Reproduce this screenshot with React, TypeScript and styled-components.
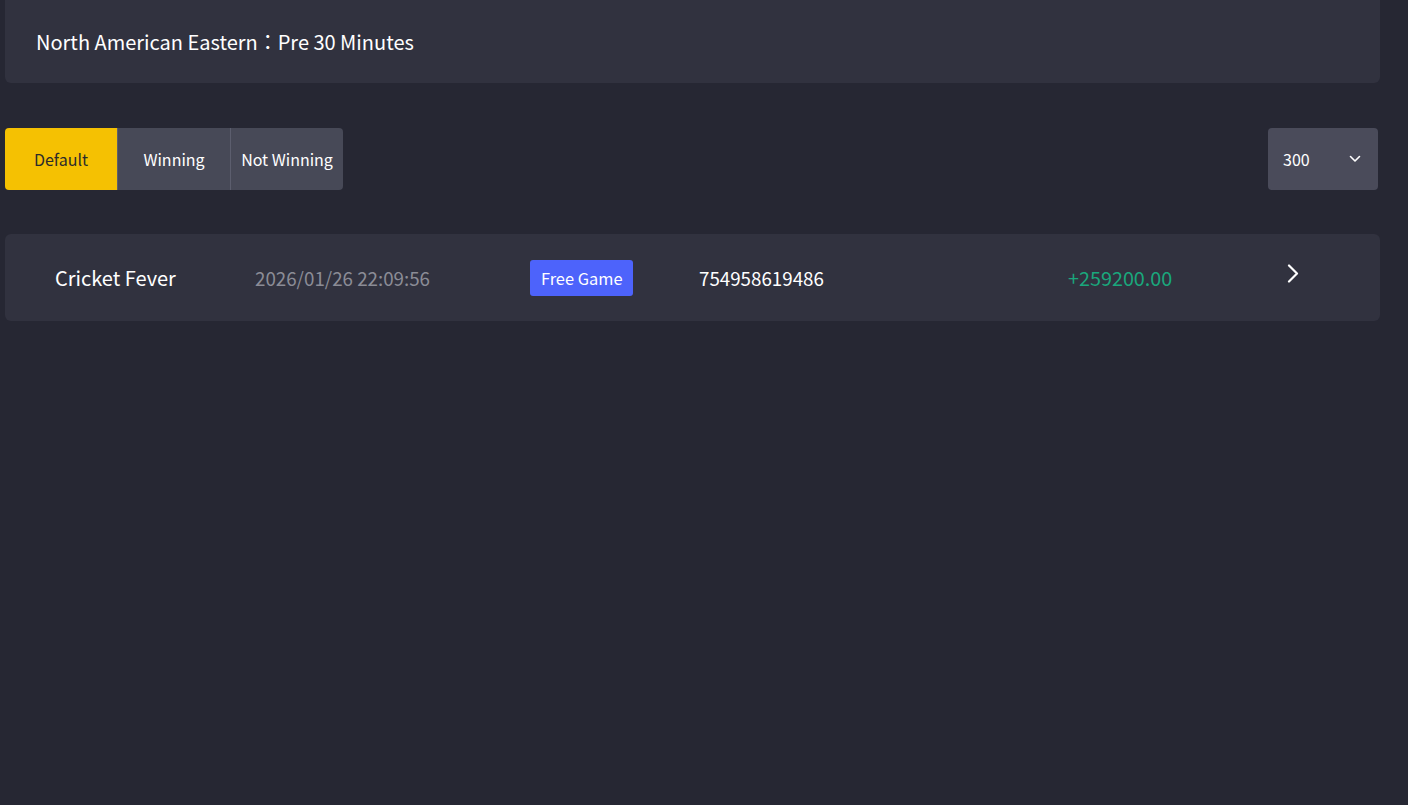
import styled, { createGlobalStyle } from "styled-components";

const GlobalStyle = createGlobalStyle`
  html, body {
    margin: 0;
    padding: 0;
    background-color: #262733;
    font-family: "Noto Sans CJK TC", "Noto Sans", sans-serif;
  }
`;

const Page = styled.main`
  min-height: 805px;
  padding: 0 28px 0 5px;
  box-sizing: border-box;
`;

const ZoneCard = styled.section`
  height: 83px;
  display: flex;
  align-items: center;
  padding-left: 31px;
  background-color: #31323f;
  border-radius: 0 0 6px 6px;
  color: #ffffff;
  font-size: 20px;
`;

const Toolbar = styled.div`
  display: flex;
  justify-content: space-between;
  align-items: center;
  margin-top: 45px;
  padding-right: 2px;
`;

const Tabs = styled.div`
  display: flex;
  border-radius: 4px;
  overflow: hidden;
`;

const Tab = styled.button<{ $active?: boolean }>`
  width: ${(p) => (p.$active ? "112px" : "113px")};
  height: 62px;
  border: none;
  border-left: ${(p) => (p.$active ? "none" : "1px solid #5c5e6e")};
  padding: 0;
  font-family: inherit;
  font-size: 16px;
  background-color: ${(p) => (p.$active ? "#f5c102" : "#474957")};
  color: ${(p) => (p.$active ? "#2b2b2b" : "#ffffff")};
  cursor: pointer;
`;

const Select = styled.div`
  width: 110px;
  height: 62px;
  box-sizing: border-box;
  display: flex;
  align-items: center;
  justify-content: space-between;
  padding: 0 17px 0 15px;
  background-color: #4a4b5a;
  border-radius: 4px;
  color: #ffffff;
  font-size: 16px;
`;

const RecordRow = styled.div`
  margin-top: 44px;
  height: 87px;
  display: grid;
  grid-template-columns: 200px 275px 169px 369px 219px 1fr;
  align-items: center;
  padding-left: 50px;
  background-color: #31323f;
  border-radius: 6px;
`;

const GameName = styled.span`
  color: #ffffff;
  font-size: 20px;
`;

const Time = styled.span`
  color: #8b8c96;
  font-size: 18.75px;
`;

const Badge = styled.span`
  justify-self: start;
  height: 36px;
  padding: 0 11px;
  display: flex;
  align-items: center;
  background-color: #4d63fb;
  border-radius: 3px;
  color: #ffffff;
  font-size: 16.4px;
`;

const OrderNo = styled.span`
  color: #ffffff;
  font-size: 18.75px;
`;

const Amount = styled.span`
  color: #1aa77c;
  font-size: 19.8px;
`;

const Arrow = styled.span`
  display: flex;
  margin-top: -9px;
`;

const ChevronDown = () => (
  <svg width="12" height="8" viewBox="0 0 12 8" fill="none">
    <path d="M1.5 1.5 L6 6 L10.5 1.5" stroke="#ffffff" strokeWidth="1.6" strokeLinecap="round" strokeLinejoin="round" />
  </svg>
);

const ChevronRight = () => (
  <svg width="12" height="19" viewBox="0 0 12 19" fill="none">
    <path d="M2 1.5 L10 9.5 L2 17.5" stroke="#ffffff" strokeWidth="2.2" strokeLinecap="round" strokeLinejoin="round" />
  </svg>
);

export default function App() {
  return (
    <>
      <GlobalStyle />
      <Page>
        <ZoneCard>North American Eastern：Pre 30 Minutes</ZoneCard>
        <Toolbar>
          <Tabs>
            <Tab $active>Default</Tab>
            <Tab>Winning</Tab>
            <Tab>Not Winning</Tab>
          </Tabs>
          <Select>
            <span>300</span>
            <ChevronDown />
          </Select>
        </Toolbar>
        <RecordRow>
          <GameName>Cricket Fever</GameName>
          <Time>2026/01/26 22:09:56</Time>
          <Badge>Free Game</Badge>
          <OrderNo>754958619486</OrderNo>
          <Amount>+259200.00</Amount>
          <Arrow>
            <ChevronRight />
          </Arrow>
        </RecordRow>
      </Page>
    </>
  );
}
